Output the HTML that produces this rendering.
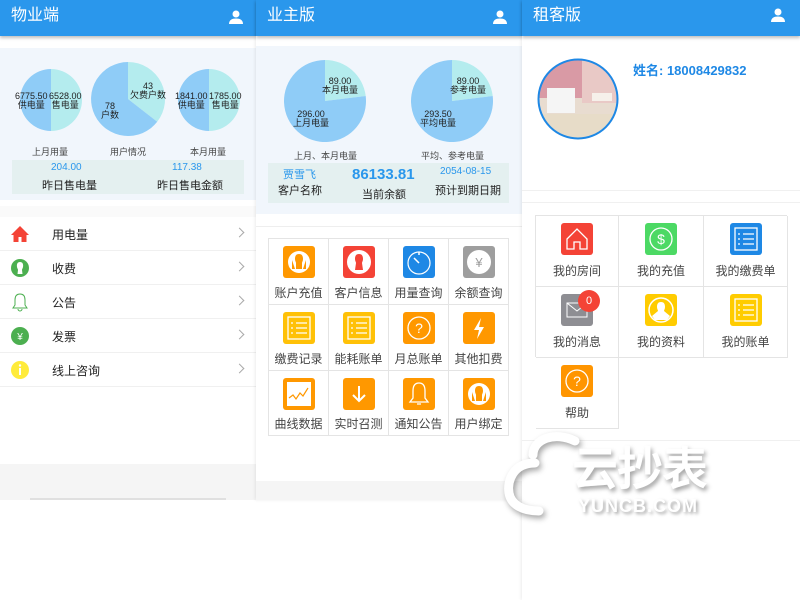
<!DOCTYPE html>
<html><head><meta charset="utf-8"><style>
*{margin:0;padding:0;box-sizing:border-box}
body{width:800px;height:600px;position:relative;overflow:hidden;background:#fff;font-family:"Liberation Sans","Noto Sans CJK SC",sans-serif;color:#333}
.a{position:absolute}
.hdr{position:absolute;top:0;height:36px;background:#2a97ec;color:#fff;font-size:16px;line-height:32px;padding-left:11px;box-shadow:0 2px 3px rgba(0,0,0,.25)}
.t{position:absolute;font-size:11px;color:#333;text-align:center;white-space:nowrap}
.pl{position:absolute;font-size:9px;line-height:9px;color:#222;text-align:center;white-space:nowrap}
.row{position:absolute;left:0;width:256px;height:34px;border-bottom:1px solid #f0f0f0}
.row span{position:absolute;left:52px;top:9px;font-size:12px;color:#222}
.row i{position:absolute;left:236px;top:12px;width:7px;height:7px;border-top:1px solid #aaa;border-right:1px solid #aaa;transform:rotate(45deg)}
.g{position:absolute;border-right:1px solid #e4e4e4;border-bottom:1px solid #e4e4e4;text-align:center}
.g svg{position:absolute;left:50%;margin-left:-16px;top:7px}
.g span{position:absolute;left:0;right:0;font-size:12px;color:#444}
</style></head><body>

<!-- Panel 1 -->
<div class="a" style="left:0;top:48px;width:256px;height:152px;background:#f1f6fc"></div>
<div class="hdr" style="left:0;width:256px">物业端</div>
<svg class="a" style="left:228px;top:9px" width="16" height="16" viewBox="0 0 16 16"><circle cx="8" cy="5" r="3.5" fill="#fff"/><path d="M1 15c0-4 3-5.5 7-5.5s7 1.5 7 5.5z" fill="#fff"/></svg>
<svg class="a" style="left:0;top:48px" width="256" height="110">
<path d="M51 21A31 31 0 0 0 51 83Z" fill="#8fccf7"/><path d="M51 21A31 31 0 0 1 51 83Z" fill="#b4ecee"/>
<path d="M128 51L128 14A37 37 0 0 1 157.2 73.8Z" fill="#b4ecee"/><path d="M128 51L157.2 73.8A37 37 0 1 1 128 14Z" fill="#8fccf7"/>
<path d="M209 21A31 31 0 0 0 209 83Z" fill="#8fccf7"/><path d="M209 21A31 31 0 0 1 209 83Z" fill="#b4ecee"/>
</svg>
<div class="pl" style="left:15px;top:92px">6775.50<br>供电量</div>
<div class="pl" style="left:49px;top:92px">6528.00<br>售电量</div>
<div class="pl" style="left:130px;top:82px">43<br>欠费户数</div>
<div class="pl" style="left:101px;top:102px">78<br>户数</div>
<div class="pl" style="left:175px;top:92px">1841.00<br>供电量</div>
<div class="pl" style="left:209px;top:92px">1785.00<br>售电量</div>
<div class="t" style="left:32px;top:145px;font-size:9px;color:#444">上月用量</div>
<div class="t" style="left:110px;top:145px;font-size:9px;color:#444">用户情况</div>
<div class="t" style="left:190px;top:145px;font-size:9px;color:#444">本月用量</div>
<div class="a" style="left:12px;top:160px;width:232px;height:34px;background:#e4f0f0"></div>
<div class="t" style="left:51px;top:162px;font-size:10px;color:#2a97ec">204.00</div>
<div class="t" style="left:42px;top:177px;font-size:11px;color:#222">昨日售电量</div>
<div class="t" style="left:172px;top:162px;font-size:10px;color:#2a97ec">117.38</div>
<div class="t" style="left:157px;top:177px;font-size:11px;color:#222">昨日售电金额</div>
<div class="a" style="left:0;top:206px;width:256px;height:11px;background:#fafafa"></div>
<div class="row" style="top:217px"><span>用电量</span><i></i></div>
<div class="row" style="top:251px"><span>收费</span><i></i></div>
<div class="row" style="top:285px"><span>公告</span><i></i></div>
<div class="row" style="top:319px"><span>发票</span><i></i></div>
<div class="row" style="top:353px"><span>线上咨询</span><i></i></div>
<svg class="a" style="left:10px;top:224px" width="20" height="20" viewBox="0 0 20 20"><path d="M10 2L1 11h2.5v7h5v-5h3v5h5v-7H19z" fill="#f44336"/></svg>
<svg class="a" style="left:10px;top:258px" width="20" height="20"><circle cx="10" cy="10" r="9" fill="#4caf50"/><path d="M10 4c-2.5 0-3.5 2-3 5 .3 1.5 1 2 1 3l-.5 4h5l-.5-4c0-1 .7-1.5 1-3 .5-3-.5-5-3-5z" fill="#fff"/></svg>
<svg class="a" style="left:10px;top:292px" width="20" height="20"><path d="M10 2c-4 0-5 3-5 6v5l-2 3h14l-2-3V8c0-3-1-6-5-6zM8 17a2 2 0 0 0 4 0" fill="none" stroke="#4caf50" stroke-width="1"/></svg>
<svg class="a" style="left:10px;top:326px" width="20" height="20"><circle cx="10" cy="10" r="9" fill="#4caf50"/><text x="10" y="14" font-size="10" fill="#fff" text-anchor="middle" font-family="Liberation Sans">¥</text></svg>
<svg class="a" style="left:10px;top:360px" width="20" height="20"><circle cx="10" cy="10" r="9" fill="#ffeb3b"/><rect x="9" y="8" width="2" height="7" fill="#fff"/><circle cx="10" cy="5.5" r="1.2" fill="#fff"/></svg>
<div class="a" style="left:0;top:464px;width:256px;height:36px;background:#f5f5f5"></div>
<div class="a" style="left:30px;top:498px;width:196px;height:2px;background:#e0e0e0"></div>

<!-- Panel 2 -->
<div class="a" style="left:256px;top:0;width:266px;height:500px;background:#fff;box-shadow:-1px 0 3px rgba(0,0,0,.08)"></div>
<div class="a" style="left:256px;top:46px;width:266px;height:168px;background:#f1f6fc"></div>
<div class="hdr" style="left:256px;width:266px">业主版</div>
<svg class="a" style="left:492px;top:9px" width="16" height="16" viewBox="0 0 16 16"><circle cx="8" cy="5" r="3.5" fill="#fff"/><path d="M1 15c0-4 3-5.5 7-5.5s7 1.5 7 5.5z" fill="#fff"/></svg>
<svg class="a" style="left:256px;top:46px" width="266" height="110">
<path d="M69 55L69 14A41 41 0 0 1 109.7 50Z" fill="#b4ecee"/><path d="M69 55L109.7 50A41 41 0 1 1 69 14Z" fill="#8fccf7"/>
<path d="M196 55L196 14A41 41 0 0 1 236.7 50Z" fill="#b4ecee"/><path d="M196 55L236.7 50A41 41 0 1 1 196 14Z" fill="#8fccf7"/>
</svg>
<div class="pl" style="left:322px;top:77px">89.00<br>本月电量</div>
<div class="pl" style="left:293px;top:110px">296.00<br>上月电量</div>
<div class="pl" style="left:450px;top:77px">89.00<br>参考电量</div>
<div class="pl" style="left:420px;top:110px">293.50<br>平均电量</div>
<div class="t" style="left:294px;top:149px;font-size:9px;color:#444">上月、本月电量</div>
<div class="t" style="left:421px;top:149px;font-size:9px;color:#444">平均、参考电量</div>
<div class="a" style="left:268px;top:163px;width:241px;height:40px;background:#e4f0f0"></div>
<div class="t" style="left:283px;top:166px;font-size:11px;color:#2a97ec">贾雪飞</div>
<div class="t" style="left:278px;top:182px;font-size:11px;color:#222">客户名称</div>
<div class="t" style="left:352px;top:166px;font-size:15px;font-weight:bold;color:#2a97ec">86133.81</div>
<div class="t" style="left:362px;top:186px;font-size:11px;color:#222">当前余额</div>
<div class="t" style="left:440px;top:166px;font-size:10px;color:#2a97ec">2054-08-15</div>
<div class="t" style="left:435px;top:182px;font-size:11px;color:#222">预计到期日期</div>
<div class="a" style="left:256px;top:226px;width:266px;height:1px;background:#eee"></div>
<div class="a" style="left:268px;top:238px;width:241px;height:198px;border-left:1px solid #e4e4e4;border-top:1px solid #e4e4e4"></div>
<div class="a" style="left:256px;top:481px;width:266px;height:19px;background:#f5f5f5"></div>

<div class="g" style="left:269px;top:239px;width:60px;height:66px"><svg width="32" height="32"><rect width="32" height="32" rx="3" fill="#ff9800"/><circle cx="16" cy="16" r="11" fill="#fff"/><path d="M16 8c-3 0-4 2-4 5 0 2 1 3 1 4v6h6v-6c0-1 1-2 1-4 0-3-1-5-4-5zM9 14v9h3M23 14v9h-3" fill="#ff9800"/></svg><span style="top:45px">账户充值</span></div>
<div class="g" style="left:329px;top:239px;width:60px;height:66px"><svg width="32" height="32"><rect width="32" height="32" rx="3" fill="#f44336"/><circle cx="16" cy="16" r="12" fill="#fff"/><path d="M16 8c-3 0-4 2-4 5 0 2 1 3 1 4l-1 7h8l-1-7c0-1 1-2 1-4 0-3-1-5-4-5z" fill="#f44336"/></svg><span style="top:45px">客户信息</span></div>
<div class="g" style="left:389px;top:239px;width:60px;height:66px"><svg width="32" height="32"><rect width="32" height="32" rx="3" fill="#1e88e5"/><circle cx="16" cy="17" r="11" fill="none" stroke="#fff" stroke-width="1.2"/><path d="M16 6v3M11 12l5 5" stroke="#fff" stroke-width="1.5"/></svg><span style="top:45px">用量查询</span></div>
<div class="g" style="left:449px;top:239px;width:60px;height:66px"><svg width="32" height="32"><rect width="32" height="32" rx="3" fill="#9e9e9e"/><circle cx="16" cy="16" r="12" fill="#fff"/><text x="16" y="21" font-size="13" fill="#9e9e9e" text-anchor="middle" font-family="Liberation Sans">¥</text></svg><span style="top:45px">余额查询</span></div>
<div class="g" style="left:269px;top:305px;width:60px;height:66px"><svg width="32" height="32"><rect width="32" height="32" rx="3" fill="#ffc107"/><rect x="5" y="5" width="22" height="22" fill="none" stroke="#fff" stroke-width="1.3"/><path d="M8 11h2M13 11h11M8 16h2M13 16h11M8 21h2M13 21h11" stroke="#fff" stroke-width="1.3"/></svg><span style="top:45px">缴费记录</span></div>
<div class="g" style="left:329px;top:305px;width:60px;height:66px"><svg width="32" height="32"><rect width="32" height="32" rx="3" fill="#ffc107"/><rect x="5" y="5" width="22" height="22" fill="none" stroke="#fff" stroke-width="1.3"/><path d="M8 11h2M13 11h11M8 16h2M13 16h11M8 21h2M13 21h11" stroke="#fff" stroke-width="1.3"/></svg><span style="top:45px">能耗账单</span></div>
<div class="g" style="left:389px;top:305px;width:60px;height:66px"><svg width="32" height="32"><rect width="32" height="32" rx="3" fill="#ff9800"/><circle cx="16" cy="16" r="11" fill="none" stroke="#fff" stroke-width="1.3"/><text x="16" y="21" font-size="14" fill="#fff" text-anchor="middle" font-family="Liberation Sans">?</text></svg><span style="top:45px">月总账单</span></div>
<div class="g" style="left:449px;top:305px;width:60px;height:66px"><svg width="32" height="32"><rect width="32" height="32" rx="3" fill="#ff9800"/><path d="M18 6l-7 12h5l-2 9 7-12h-5z" fill="#fff"/></svg><span style="top:45px">其他扣费</span></div>
<div class="g" style="left:269px;top:371px;width:60px;height:65px"><svg width="32" height="32"><rect width="32" height="32" rx="3" fill="#ff9800"/><rect x="4" y="4" width="24" height="24" fill="#fff"/><path d="M6 20l4-3 3 4 4-6 3 3 5-8" stroke="#ff9800" fill="none" stroke-width="1.2"/></svg><span style="top:44px">曲线数据</span></div>
<div class="g" style="left:329px;top:371px;width:60px;height:65px"><svg width="32" height="32"><rect width="32" height="32" rx="3" fill="#ff9800"/><path d="M16 8v15M10 17l6 6 6-6" stroke="#fff" fill="none" stroke-width="2"/></svg><span style="top:44px">实时召测</span></div>
<div class="g" style="left:389px;top:371px;width:60px;height:65px"><svg width="32" height="32"><rect width="32" height="32" rx="3" fill="#ff9800"/><path d="M16 5c-5 0-6 4-6 8v7l-3 4h18l-3-4v-7c0-4-1-8-6-8zM14 26h4" fill="none" stroke="#fff" stroke-width="1.3"/></svg><span style="top:44px">通知公告</span></div>
<div class="g" style="left:449px;top:371px;width:60px;height:65px"><svg width="32" height="32"><rect width="32" height="32" rx="3" fill="#ff9800"/><circle cx="16" cy="16" r="11" fill="#fff"/><path d="M16 8c-3 0-4 2-4 5 0 2 1 3 1 4v6h6v-6c0-1 1-2 1-4 0-3-1-5-4-5zM9 14v9h3M23 14v9h-3" fill="#ff9800"/></svg><span style="top:44px">用户绑定</span></div>

<!-- Panel 3 -->
<div class="a" style="left:522px;top:0;width:278px;height:600px;background:#fff;box-shadow:-1px 0 3px rgba(0,0,0,.08)"></div>
<div class="hdr" style="left:522px;width:278px">租客版</div>
<svg class="a" style="left:770px;top:7px" width="16" height="16" viewBox="0 0 16 16"><circle cx="8" cy="5" r="3.5" fill="#fff"/><path d="M1 15c0-4 3-5.5 7-5.5s7 1.5 7 5.5z" fill="#fff"/></svg>
<svg class="a" style="left:537px;top:58px" width="82" height="82">
<defs><clipPath id="c"><circle cx="41" cy="41" r="39"/></clipPath></defs>
<g clip-path="url(#c)"><rect width="82" height="82" fill="#e8dcd0"/><rect width="45" height="40" fill="#d99aa5"/><rect x="45" width="37" height="45" fill="#e9c9c6"/><rect x="10" y="30" width="28" height="25" fill="#f5f5f5"/><rect x="0" y="56" width="82" height="26" fill="#e7dcc8"/><rect x="55" y="35" width="20" height="8" fill="#f6f0ea"/></g>
<circle cx="41" cy="41" r="39.5" fill="none" stroke="#1e88e5" stroke-width="2"/></svg>
<div class="t" style="left:633px;top:60px;font-size:13px;font-weight:bold;color:#1e88e5">姓名: 18008429832</div>
<div class="a" style="left:522px;top:190px;width:278px;height:1px;background:#f0f0f0"></div>
<div class="a" style="left:522px;top:202px;width:278px;height:1px;background:#f0f0f0"></div>
<div class="a" style="left:535px;top:215px;width:252px;height:142px;border-left:1px solid #e4e4e4;border-top:1px solid #e4e4e4"></div>
<div class="g" style="left:536px;top:216px;width:83px;height:71px"><svg width="32" height="32"><rect width="32" height="32" rx="3" fill="#f44336"/><path d="M6 16L16 6l10 10v10h-7v-7h-6v7H6z" fill="none" stroke="#fff" stroke-width="1.3"/></svg><span style="top:46px">我的房间</span></div>
<div class="g" style="left:619px;top:216px;width:85px;height:71px"><svg width="32" height="32"><rect width="32" height="32" rx="3" fill="#4cd964"/><circle cx="16" cy="16" r="11" fill="none" stroke="#fff" stroke-width="1.3"/><text x="16" y="21" font-size="14" fill="#fff" text-anchor="middle" font-family="Liberation Sans">$</text></svg><span style="top:46px">我的充值</span></div>
<div class="g" style="left:704px;top:216px;width:84px;height:71px"><svg width="32" height="32"><rect width="32" height="32" rx="3" fill="#1e88e5"/><rect x="5" y="5" width="22" height="22" fill="none" stroke="#fff" stroke-width="1.3"/><path d="M8 11h2M13 11h11M8 16h2M13 16h11M8 21h2M13 21h11" stroke="#fff" stroke-width="1.3"/></svg><span style="top:46px">我的缴费单</span></div>
<div class="g" style="left:536px;top:287px;width:83px;height:71px"><svg width="32" height="32"><rect width="32" height="32" rx="3" fill="#8e8e93"/><rect x="6" y="9" width="20" height="14" fill="none" stroke="#fff" stroke-width="1"/><path d="M6 9l10 8 10-8" fill="none" stroke="#fff" stroke-width="1"/></svg><span style="top:46px">我的消息</span></div>
<div class="a" style="left:578px;top:290px;width:22px;height:22px;border-radius:50%;background:#f44336;color:#fff;font-size:11px;text-align:center;line-height:22px">0</div>
<div class="g" style="left:619px;top:287px;width:85px;height:71px"><svg width="32" height="32"><rect width="32" height="32" rx="3" fill="#ffcc00"/><circle cx="16" cy="16" r="12" fill="none" stroke="#fff" stroke-width="1.5"/><path d="M16 8c-3 0-4 2-4 5 0 2 1 3 1 4l-6 5 3 4h12l3-4-6-5c0-1 1-2 1-4 0-3-1-5-4-5z" fill="#fff"/></svg><span style="top:46px">我的资料</span></div>
<div class="g" style="left:704px;top:287px;width:84px;height:71px"><svg width="32" height="32"><rect width="32" height="32" rx="3" fill="#ffcc00"/><rect x="5" y="5" width="22" height="22" fill="none" stroke="#fff" stroke-width="1.3"/><path d="M8 11h2M13 11h11M8 16h2M13 16h11M8 21h2M13 21h11" stroke="#fff" stroke-width="1.3"/></svg><span style="top:46px">我的账单</span></div>
<div class="g" style="left:536px;top:358px;width:83px;height:71px"><svg width="32" height="32"><rect width="32" height="32" rx="3" fill="#ff9500"/><circle cx="16" cy="16" r="11" fill="none" stroke="#fff" stroke-width="1.3"/><text x="16" y="21" font-size="14" fill="#fff" text-anchor="middle" font-family="Liberation Sans">?</text></svg><span style="top:46px">帮助</span></div>
<div class="a" style="left:522px;top:440px;width:278px;height:1px;background:#f0f0f0"></div>

<!-- watermark -->
<svg class="a" style="left:495px;top:425px;filter:drop-shadow(2px 3px 3px rgba(0,0,0,.35))" width="100" height="100"><path d="M80 16C60 6 38 14 38 30" fill="none" stroke="#fff" stroke-width="9" stroke-linecap="round"/><path d="M40 38C18 38 12 56 14 68c2 12 14 18 30 18" fill="none" stroke="#fff" stroke-width="9" stroke-linecap="round"/></svg>
<div class="a" style="left:572px;top:438px;font-size:46px;font-weight:bold;color:#fff;letter-spacing:-1px;text-shadow:2px 3px 4px rgba(0,0,0,.35);font-family:'Noto Sans CJK SC',sans-serif;line-height:56px">云抄表</div>
<div class="a" style="left:578px;top:496px;font-size:18px;font-weight:bold;color:#fff;letter-spacing:1px;text-shadow:2px 2px 3px rgba(0,0,0,.35)">YUNCB.COM</div>
</body></html>
